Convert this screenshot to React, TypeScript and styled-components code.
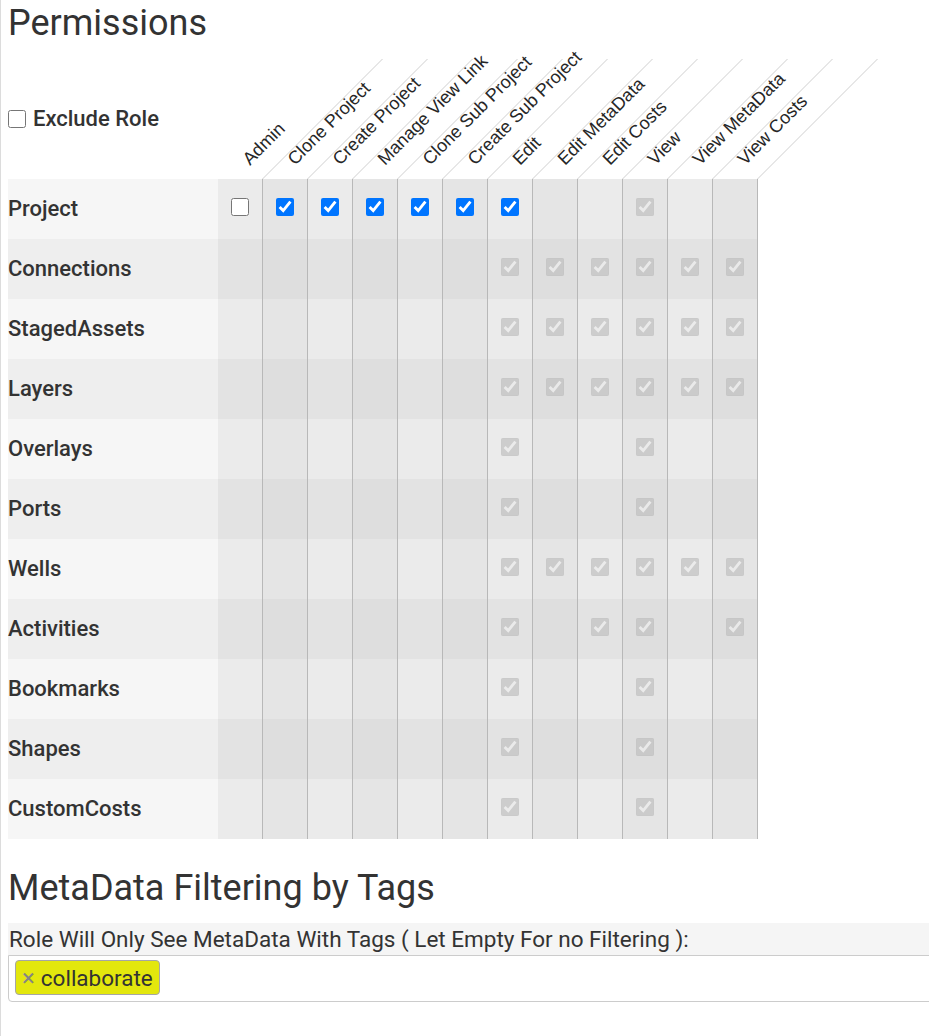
import React from "react";
import styled, { createGlobalStyle } from "styled-components";

const Global = createGlobalStyle`
  html, body { margin: 0; padding: 0; background: #fff; }
  body {
    font-family: Roboto, "Liberation Sans", Arial, sans-serif;
    color: #333;
    overflow-x: hidden;
  }
  * { box-sizing: border-box; }
`;

const Page = styled.div`
  border-left: 1px solid #dcdcdc;
  padding: 2px 0 34px 7px;
  min-height: 1036px;
`;

const Title = styled.h2`
  margin: 0 0 14px;
  font: 400 36px/1.2 Roboto, "Liberation Sans", sans-serif;
  color: #333;
`;

const SectionTitle = styled(Title)`
  margin: 28px 0 13px;
`;

const HeaderRow = styled.div`
  display: flex;
  height: 120px;
`;

const HeaderLead = styled.label`
  width: 210px;
  flex: none;
  display: flex;
  align-items: center;
  gap: 7px;
  font: 500 22px/1.2 Roboto, "Liberation Sans", sans-serif;
  color: #333;
`;

const Check = styled.input.attrs({ type: "checkbox" })`
  width: 18px;
  height: 18px;
  margin: 0;
  flex: none;
`;

const HeaderCell = styled.div`
  position: relative;
  width: 45px;
  flex: none;
`;

const Slant = styled.div`
  position: absolute;
  inset: 0;
  transform: skewX(-45deg);
  transform-origin: 0 100%;
  border-right: 1px solid #cfcfcf;
`;

const HeadLabel = styled.span`
  position: absolute;
  left: 34px;
  bottom: 11px;
  transform: rotate(-45deg);
  transform-origin: 0 100%;
  white-space: nowrap;
  font: 400 18px/1 "Liberation Sans", Arial, sans-serif;
  color: #262626;
`;

const Table = styled.div`
  width: max-content;
`;

const Row = styled.div<{ $odd: boolean }>`
  display: grid;
  grid-template-columns: 210px repeat(12, 45px);
  height: 60px;
  background: ${(p) => (p.$odd ? "#f6f6f6" : "#eeeeee")};
`;

const RowLabel = styled.div`
  display: flex;
  align-items: center;
  padding-bottom: 2px;
  font: 500 22px Roboto, "Liberation Sans", sans-serif;
  color: #333;
`;

const Cell = styled.div<{ $even: boolean }>`
  display: flex;
  align-items: center;
  justify-content: center;
  padding-bottom: 4px;
  border-right: 1px solid #b8b8b8;
  background: rgba(0, 0, 0, ${(p) => (p.$even ? 0.065 : 0.045)});
`;

const FieldLabel = styled.div`
  background: #f5f5f5;
  font: 400 22.5px/32px Roboto, "Liberation Sans", sans-serif;
  padding-left: 1px;
  white-space: nowrap;
  color: #333;
`;

const TagBox = styled.div`
  height: 47px;
  margin-right: -20px;
  border: 1px solid #cccccc;
  border-radius: 0 0 4px 4px;
  padding: 4px 6px;
  display: flex;
  align-items: flex-start;
`;

const Chip = styled.span`
  display: inline-flex;
  align-items: center;
  gap: 6px;
  height: 35px;
  padding: 0 6px;
  background: #e3e70d;
  border: 1px solid #a6a6a6;
  border-radius: 4px;
  font: 400 22.5px Roboto, "Liberation Sans", sans-serif;
  color: #333;
`;

const ChipRemove = styled.span`
  color: #858585;
  font-size: 24px;
`;

const columns = [
  "Admin",
  "Clone Project",
  "Create Project",
  "Manage View Link",
  "Clone Sub Project",
  "Create Sub Project",
  "Edit",
  "Edit MetaData",
  "Edit Costs",
  "View",
  "View MetaData",
  "View Costs",
];

type Mark = "off" | "on" | "dis" | null;

const full = [7, 8, 9, 10, 11, 12];
const two = [7, 10];

const rows: { name: string; dis: number[] }[] = [
  { name: "Project", dis: [10] },
  { name: "Connections", dis: full },
  { name: "StagedAssets", dis: full },
  { name: "Layers", dis: full },
  { name: "Overlays", dis: two },
  { name: "Ports", dis: two },
  { name: "Wells", dis: full },
  { name: "Activities", dis: [7, 9, 10, 12] },
  { name: "Bookmarks", dis: two },
  { name: "Shapes", dis: two },
  { name: "CustomCosts", dis: two },
];

function markFor(rowIndex: number, col: number, dis: number[]): Mark {
  if (rowIndex === 0) {
    if (col === 1) return "off";
    if (col >= 2 && col <= 7) return "on";
  }
  if (dis.includes(col)) return "dis";
  return null;
}

export default function App() {
  return (
    <Page>
      <Global />
      <Title>Permissions</Title>
      <HeaderRow>
        <HeaderLead>
          <Check />
          Exclude Role
        </HeaderLead>
        {columns.map((c) => (
          <HeaderCell key={c}>
            <Slant />
            <HeadLabel>{c}</HeadLabel>
          </HeaderCell>
        ))}
      </HeaderRow>
      <Table>
        {rows.map((r, ri) => (
          <Row key={r.name} $odd={ri % 2 === 0}>
            <RowLabel>{r.name}</RowLabel>
            {columns.map((c, ci) => {
              const m = markFor(ri, ci + 1, r.dis);
              return (
                <Cell key={c} $even={(ci + 1) % 2 === 0}>
                  {m === "off" && <Check defaultChecked={false} />}
                  {m === "on" && <Check defaultChecked />}
                  {m === "dis" && <Check defaultChecked disabled />}
                </Cell>
              );
            })}
          </Row>
        ))}
      </Table>
      <SectionTitle>MetaData Filtering by Tags</SectionTitle>
      <FieldLabel>Role Will Only See MetaData With Tags ( Let Empty For no Filtering ):</FieldLabel>
      <TagBox>
        <Chip>
          <ChipRemove>×</ChipRemove>
          collaborate
        </Chip>
      </TagBox>
    </Page>
  );
}
